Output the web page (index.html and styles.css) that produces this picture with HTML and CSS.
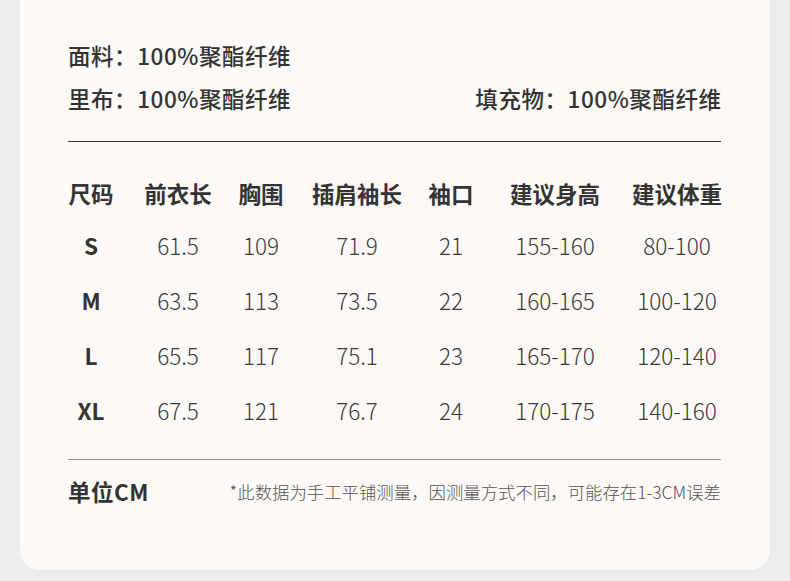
FILE: index.html
```html
<!DOCTYPE html>
<html lang="zh">
<head>
<meta charset="utf-8">
<link rel="stylesheet" href="styles.css">
</head>
<body>
<div class="card">
  <div class="info">
    <div class="info-row">面料：100%聚酯纤维</div>
    <div class="info-row split">
      <span>里布：100%聚酯纤维</span>
      <span>填充物：100%聚酯纤维</span>
    </div>
  </div>
  <div class="rule dark"></div>
  <div class="table">
    <div class="tr head">
      <div>尺码</div><div>前衣长</div><div>胸围</div><div>插肩袖长</div><div>袖口</div><div>建议身高</div><div>建议体重</div>
    </div>
    <div class="tr">
      <div class="size">S</div><div>61.5</div><div>109</div><div>71.9</div><div>21</div><div>155-160</div><div>80-100</div>
    </div>
    <div class="tr">
      <div class="size">M</div><div>63.5</div><div>113</div><div>73.5</div><div>22</div><div>160-165</div><div>100-120</div>
    </div>
    <div class="tr">
      <div class="size">L</div><div>65.5</div><div>117</div><div>75.1</div><div>23</div><div>165-170</div><div>120-140</div>
    </div>
    <div class="tr">
      <div class="size">XL</div><div>67.5</div><div>121</div><div>76.7</div><div>24</div><div>170-175</div><div>140-160</div>
    </div>
  </div>
  <div class="rule light"></div>
  <div class="footer">
    <span class="unit">单位CM</span>
    <span class="note">*此数据为手工平铺测量，因测量方式不同，可能存在1-3CM误差</span>
  </div>
</div>
</body>
</html>
```

FILE: styles.css
```css
* { box-sizing: border-box; }
html, body { margin: 0; padding: 0; }
body {
  background: #ececec;
  width: 790px;
  height: 581px;
  overflow: hidden;
  font-family: "Noto Sans CJK SC", "Noto Sans", sans-serif;
  color: #333;
}
.card {
  margin: 0 20px;
  height: 570px;
  background: #fcf9f6;
  border-radius: 0 0 20px 20px;
  padding: 40px 49px 0 48px;
}
.info-row {
  font-size: 22.5px;
  line-height: 30px;
  height: 30px;
  font-weight: 500;
  letter-spacing: 0.55px;
  white-space: nowrap;
}
.info-row + .info-row { margin-top: 13px; }
.split { display: flex; justify-content: space-between; margin-right: -0.55px; }
.rule { height: 1px; }
.rule.dark { background: #3a3a3a; margin-top: 28px; }
.rule.light { background: #9a9894; margin-top: 22px; }
.table { margin-top: 27px; margin-left: -20px; }
.tr {
  display: grid;
  grid-template-columns: 86px 88px 78px 114px 74px 134px 110px;
  height: 55px;
  align-items: center;
  text-align: center;
  font-size: 22.5px;
  font-weight: 300;
  color: #3a3a3a;
  white-space: nowrap;
}
.tr.head { height: 48px; font-weight: 700; color: #333; }
.tr .size { font-weight: 700; color: #333; }
.footer {
  margin-top: 16px;
  display: flex;
  justify-content: space-between;
  align-items: center;
  height: 30px;
}
.unit { font-size: 22.5px; font-weight: 700; letter-spacing: 0.5px; }
.note { font-size: 17.4px; font-weight: 300; color: #555; white-space: nowrap; }
```
